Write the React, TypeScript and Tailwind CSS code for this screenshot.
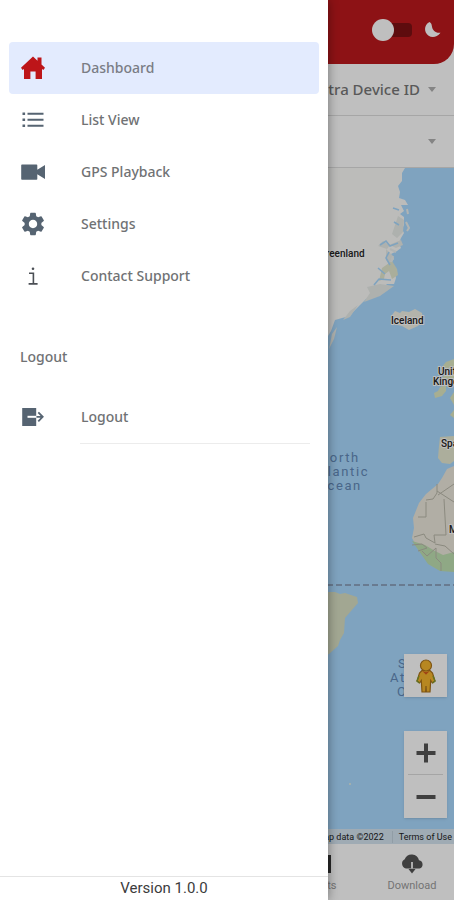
import { useState } from "react";
import type { ReactNode } from "react";
import { MdSettings } from "react-icons/md";

type MenuKey = "dashboard" | "list" | "playback" | "settings" | "support";

function HomeIcon() {
  return (
    <svg viewBox="0 0 24 24" className="size-6 text-[#bd1519]" fill="currentColor">
      <path d="M12 .5 0 11.8 1.6 14 3 13V23h6.4v-7.5h5.2V23H21V13l1.4 1 1.6-2.2-3.5-3.3V1.5h-4v3.2z" />
    </svg>
  );
}

function ListIcon() {
  return (
    <svg viewBox="0 0 24 24" className="size-6" fill="currentColor">
      <path d="M1.5 4.5h2.6v2.4H1.5zM1.5 10.500h2.600v2.400H1.500zM1.500 16.500h2.600v2.400H1.500zM6.500 4.700h16v2h-16zM6.500 10.700h16v2h-16zM6.500 16.700h16v2h-16z" />
    </svg>
  );
}

function VideoIcon() {
  return (
    <svg viewBox="0 0 24 24" className="size-6" fill="currentColor">
      <path d="M1 4.5h14.5q.8 0 .8.8v4.5L24 5v14l-7.7-4.7v4.6q0 .8-.8.8H1q-.8 0-.8-.8V5.3q0-.8.8-.8z" />
    </svg>
  );
}

function InfoIcon() {
  return (
    <svg viewBox="0 0 24 24" className="size-6" fill="none" stroke="#4b4f55" strokeWidth="1.6">
      <path d="M8 9.3h4.4v10.4M7.6 19.9h9" />
      <circle cx="12" cy="4.8" r="1.3" fill="#4b4f55" stroke="none" />
    </svg>
  );
}

function ExitIcon() {
  return (
    <svg viewBox="0 0 24 24" className="size-6" fill="none">
      <path d="M1.2 3h14v18h-14z" fill="currentColor" />
      <path d="M6.5 11.8h9" stroke="#fff" strokeWidth="2" />
      <path d="M15.5 11.8h6M17.3 7.3l4.4 4.5-4.4 4.5" stroke="currentColor" strokeWidth="1.8" />
    </svg>
  );
}

function CloudDownloadIcon() {
  return (
    <svg viewBox="0 0 24 24" className="size-6 text-[#555]" fill="currentColor">
      <path d="M6 16.500A5 5 0 0 1 4.700 7.200 7.500 7.500 0 0 1 19 8.300a4.200 4.200 0 0 1 .5 8.200z" />
      <path d="M11 10h2v6.500h-2z" fill="#e8e8e8" />
      <path d="M8.500 17h7L12 21.500z" />
    </svg>
  );
}

const MENU: { key: MenuKey; label: string; icon: ReactNode }[] = [
  { key: "dashboard", label: "Dashboard", icon: <HomeIcon /> },
  { key: "list", label: "List View", icon: <ListIcon /> },
  { key: "playback", label: "GPS Playback", icon: <VideoIcon /> },
  { key: "settings", label: "Settings", icon: <MdSettings className="size-7" /> },
  { key: "support", label: "Contact Support", icon: <InfoIcon /> },
];

function MenuItem({
  label,
  icon,
  active = false,
  onClick,
}: {
  label: string;
  icon: ReactNode;
  active?: boolean;
  onClick?: () => void;
}) {
  return (
    <button
      type="button"
      onClick={onClick}
      className={`flex h-[52px] w-full items-center rounded text-left text-sm font-medium ${
        active ? "bg-[#e3ebfe] text-[#7a7d85]" : "text-[#707274]"
      }`}
    >
      <span className="flex w-12 shrink-0 justify-center text-[#566472]">{icon}</span>
      <span className="pl-6">{label}</span>
    </button>
  );
}

function Drawer() {
  const [active, setActive] = useState<MenuKey>("dashboard");

  return (
    <aside className="absolute inset-y-0 left-0 flex w-[328px] flex-col bg-white shadow-[0_0_10px_rgba(0,0,0,0.4)]">
      <nav className="flex-1 px-[9px] pt-[42px]">
        {MENU.map((item) => (
          <MenuItem
            key={item.key}
            label={item.label}
            icon={item.icon}
            active={active === item.key}
            onClick={() => setActive(item.key)}
          />
        ))}
        <h2 className="mt-[45px] mb-6 pl-[11px] text-sm leading-5 font-medium text-[#707274]">Logout</h2>
        <MenuItem label="Logout" icon={<ExitIcon />} />
        <hr className="mr-[9px] ml-[71px] border-[#ececec]" />
      </nav>
      <footer className="border-t border-[#e4e4e4] pt-px pb-0.5 text-center font-[Roboto] text-[15px] leading-5 text-[#3c3c3c]">
        Version 1.0.0
      </footer>
    </aside>
  );
}

function WorldMap() {
  return (
    <svg
      viewBox="0 168 454 676"
      preserveAspectRatio="xMaxYMin slice"
      className="absolute inset-0 size-full bg-[#aadaff]"
      fontFamily="Roboto, sans-serif"
    >
      {/* Greenland */}
      <path
        fill="#fbfbf9"
        d="M300 168H405l-3 5 0 8-4 5 2 6-1 6 6 2 3 5-7 0 3 6-4 3 4 3 0 8-2 4 2 4-3 5-2 5 2 5-4 3-6 3 3 5-3 4 3 6 2 9-2 6-8 0 3 3-8 6-6 3-9 3-6 6-6 6-4 5-8 2-7 2-4 11-3 5-1 8-4 8v10h-28z"
      />
      <path
        fill="#e8ece8"
        d="M398 216l6 4-1 12-6 6-5-4zM378 246l5-5 6 4 12-5 2 5-7 3-6-3-3 4zM386 249l8 8-3 8-5-5zM367 287l13-3 14 2-14 10-16 6 6-9zM350 311l8-6-8 12-7 3zM332 334l5-7-3 12-5 10z"
      />
      <path fill="#e3e9cf" d="M382 268l10-7 5 8 1 6-6 4-3-8-4 3-1 5-5 2z" />
      <path
        fill="none"
        stroke="#aadaff"
        strokeWidth="1.6"
        d="M380 245l6-4 4 5 8-3M389 252l-3 6 4 7M391 280l-12-1-5 6M378 268l7 6M399 210l-6-2M399 225l-5-3"
      />
      <path
        fill="none"
        stroke="#edf1ef"
        strokeWidth="2"
        d="M407 209l1 5M406 222l3 6-2 3M390 249l6 3M393 256l-2 6"
      />
      {/* Iceland */}
      <path
        fill="#f0f0e4"
        d="M392 315l3-4 5 2 2-2 7 1 6-3 7 4 1 7-5 6-9 4-7-4-9-2 3-4z"
      />
      {/* British Isles */}
      <path
        fill="#dfe8c2"
        d="M454 359l-8 3-5 6 5 5-4 5 12 2zM440 387l6-2 0 6-4 5-7 2-1-5 4-2zM454 392l-4 6 4 7zM454 410l-4 5 4 3z"
      />
      {/* Iberia */}
      <path fill="#e6e9d0" d="M454 436l-14 1-1 9-1 12 4 5 8 1 4-3z" />
      {/* Africa */}
      <path
        fill="#ede8dc"
        d="M454 466l-7 3-5 9-4 6-12 10-7 9-6 15 1 10-2 10 6 11 14 17 8 4h14z"
      />
      <path fill="#bfe0b2" d="M412 541l13 4 10 6 8 4 11-3v20l-14-1-12-7-9-13z" />
      <path
        fill="none"
        stroke="#b9b8aa"
        strokeWidth="1"
        d="M437 484v9l-4 6-7 1M437 491l17 11M454 484l-16 11M418 517h8v-15M414 537l10-3 2 4 9 5-1-8h12l-2-36M412 545l10-1 5 4-9 3M422 551l5 5 9-8 0 10 5 5v8M435 544l10 2 9 8"
      />
      {/* Brazil */}
      <path
        fill="#d8dfc3"
        d="M300 592h35l5 2 5-1 12 4 1 6-7 8-6 7-1 15-4 7-2 6-9 8-8 4h-21z"
      />
      <path d="M300 585h154" stroke="#8292ac" strokeWidth="1.3" strokeDasharray="6 3" />
      <path d="M349 784h2" stroke="#e6efe0" strokeWidth="1.5" />

      <g fill="#6289b8" fontSize="13" letterSpacing="1.6">
        <text x="319" y="462">North</text>
        <text x="312" y="476">Atlantic</text>
        <text x="317" y="490">Ocean</text>
        <text x="398" y="668">South</text>
        <text x="390" y="682">Atlantic</text>
        <text x="397" y="696">Ocean</text>
      </g>
      <g
        fill="#252525"
        fontSize="10"
        fontWeight="500"
        stroke="#fff"
        strokeWidth="2"
        paintOrder="stroke"
        strokeLinejoin="round"
      >
        <text x="319" y="257">Greenland</text>
        <text x="391" y="324">Iceland</text>
        <text x="438" y="375">United</text>
        <text x="433" y="385">Kingdom</text>
        <text x="441" y="447">Spain</text>
        <text x="449" y="533">Mali</text>
      </g>
    </svg>
  );
}

function Pegman() {
  return (
    <svg viewBox="0 0 24 36" className="h-9 w-6">
      <path
        fill="#f5b52c"
        stroke="#a87019"
        strokeWidth="1.2"
        d="M8 12.5 5.5 15 3 23l2.5 2 1.8-2.5L8 34h3.6l.4-6 .4 6H16l.7-11.5 1.8 2.5 2.5-2-2.5-8-2.5-2.5z"
      />
      <circle cx="12" cy="7.5" r="5.5" fill="#f5b52c" stroke="#a87019" strokeWidth="1.2" />
      <path d="m8 12.8 4 4 4-4-4 1.4z" fill="#d3581b" />
      <path d="M5 18l-2 5 2.5 2M19 18l2 5-2.5 2" fill="none" stroke="#85992c" strokeWidth="1.4" />
    </svg>
  );
}

function MapControls() {
  return (
    <div className="absolute right-[7px] bottom-[26px] flex w-[43px] flex-col gap-[34px]">
      <button
        type="button"
        aria-label="Street View"
        className="flex h-[43px] items-center justify-center bg-white shadow"
      >
        <Pegman />
      </button>
      <div className="flex flex-col bg-white shadow">
        <button type="button" aria-label="Zoom in" className="flex h-[43px] items-center justify-center">
          <svg viewBox="0 0 20 20" className="size-5" stroke="#555" strokeWidth="4">
            <path d="M.5 10h19M10 .5v19" />
          </svg>
        </button>
        <hr className="mx-1 border-[#dcdcdc]" />
        <button type="button" aria-label="Zoom out" className="flex h-[43px] items-center justify-center">
          <svg viewBox="0 0 20 20" className="size-5" stroke="#555" strokeWidth="4">
            <path d="M.5 10h19" />
          </svg>
        </button>
      </div>
    </div>
  );
}

function Caret() {
  return (
    <svg viewBox="0 0 8 5" className="h-[5px] w-2" fill="#b0b0b0">
      <path d="M0 0h8L4 5z" />
    </svg>
  );
}

export default function App() {
  const [dark, setDark] = useState(false);

  return (
    <div className="relative flex h-screen flex-col overflow-hidden bg-white font-['Noto_Sans',sans-serif]">
      <header className="flex h-16 shrink-0 items-center justify-end gap-3 rounded-br-[20px] bg-[#bd191d] pr-3 pb-1">
        <label className="relative flex h-6 w-10 items-center">
          <input
            type="checkbox"
            aria-label="Dark mode"
            checked={dark}
            onChange={(e) => setDark(e.target.checked)}
            className="peer sr-only"
          />
          <span className="ml-2 h-[14px] w-8 rounded-sm bg-[#7c1113]" />
          <span className="absolute left-0 size-[22px] rounded-full bg-white peer-checked:left-4" />
        </label>
        <svg viewBox="0 0 18 18" className="size-[18px]" fill="#fff">
          <path d="M5.5 1C1.500 3 0 7.500 1.800 11.500c2.300 5 9.700 6.700 14.700.3-3.500.2-6-.8-7.500-3.300C7.400 6 8.500 2.500 5.500 1z" />
        </svg>
      </header>

      <div className="flex h-[52px] shrink-0 items-center justify-end gap-2 border-b border-[#dedede] pr-[18px]">
        <select
          aria-label="Device"
          className="appearance-none bg-transparent text-right text-[15px] font-medium text-[#777]"
        >
          <option>Yantra Device ID</option>
        </select>
        <Caret />
      </div>
      <div className="flex h-[52px] shrink-0 items-center justify-end gap-2 border-b border-[#dedede] pr-[18px]">
        <select aria-label="Group" className="flex-1 appearance-none bg-transparent text-[15px]" />
        <Caret />
      </div>

      <main className="relative min-h-0 flex-1">
        <WorldMap />
        <MapControls />
        <div className="absolute right-0 bottom-0 flex h-[15px] items-center bg-[#d5e4f0] text-[9px] leading-3 text-[#222] font-[Roboto]">
          <span className="pr-2 pl-2">Map data ©2022</span>
          <a href="#terms" className="border-l border-[#c2d2de] pr-0.5 pl-1.5">
            Terms of Use
          </a>
        </div>
      </main>

      <nav className="flex h-14 shrink-0 justify-end gap-1.5 bg-white text-[11px] leading-4 text-[#9b9b9b] font-[Roboto]">
        <button type="button" className="flex w-[84px] flex-col items-center pt-2">
          <svg viewBox="0 0 24 24" className="size-6" fill="#333">
            <path d="M4 3h17v18H4z" />
          </svg>
          <span className="pt-0.5">Alerts</span>
        </button>
        <button type="button" className="flex w-[84px] flex-col items-center pt-2">
          <CloudDownloadIcon />
          <span className="pt-0.5">Download</span>
        </button>
      </nav>

      <div className="absolute inset-0 bg-black/25" />
      <Drawer />
    </div>
  );
}
